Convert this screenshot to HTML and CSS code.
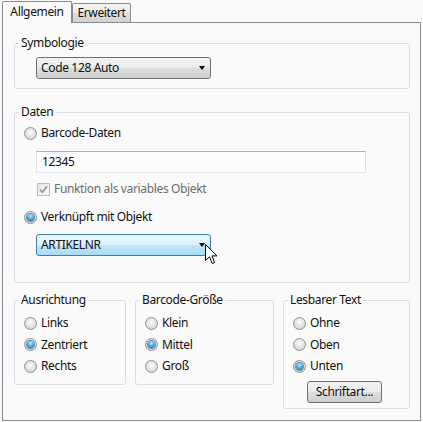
FILE: index.html
```html
<!DOCTYPE html>
<html lang="de">
<head>
<meta charset="utf-8">
<title>Barcode</title>
<link rel="stylesheet" href="styles.css">
</head>
<body>
<div class="dialog">
  <div class="tabs">
    <div class="tab active">Allgemein</div>
    <div class="tab">Erweitert</div>
  </div>
  <div class="panel">
    <fieldset class="group g-sym">
      <legend>Symbologie</legend>
      <div class="body">
        <div class="combo"><span class="val">Code 128 Auto</span><span class="arrow"></span></div>
      </div>
    </fieldset>

    <fieldset class="group g-daten">
      <legend>Daten</legend>
      <div class="body">
        <div class="opt"><span class="radio"></span><span>Barcode-Daten</span></div>
        <div class="textbox">12345</div>
        <div class="opt chk disabled">
          <span class="checkbox"><svg width="13" height="13" viewBox="0 0 13 13"><path d="M3 6.5 L5.4 9.2 L10 3.4" fill="none" stroke="#9a9a9a" stroke-width="1.7"/></svg></span>
          <span>Funktion als variables Objekt</span>
        </div>
        <div class="opt opt-link"><span class="radio on"></span><span>Verknüpft mit Objekt</span></div>
        <div class="combo hot"><span class="val">ARTIKELNR</span><span class="arrow"></span>
          <svg class="cursor" width="13" height="21" viewBox="0 0 13 21"><path d="M0.5 0.5 L0.5 16.5 L4.5 12.8 L7.2 19.5 L9.6 18.5 L7 11.9 L12 11.9 Z" fill="#fff" stroke="#000" stroke-width="1" stroke-linejoin="miter"/></svg>
        </div>
      </div>
    </fieldset>

    <div class="row">
      <fieldset class="group g-aus">
        <legend>Ausrichtung</legend>
        <div class="body list">
          <div class="opt"><span class="radio"></span><span>Links</span></div>
          <div class="opt"><span class="radio on"></span><span>Zentriert</span></div>
          <div class="opt"><span class="radio"></span><span>Rechts</span></div>
        </div>
      </fieldset>
      <fieldset class="group g-size">
        <legend>Barcode-Größe</legend>
        <div class="body list">
          <div class="opt"><span class="radio"></span><span>Klein</span></div>
          <div class="opt"><span class="radio on"></span><span>Mittel</span></div>
          <div class="opt"><span class="radio"></span><span>Groß</span></div>
        </div>
      </fieldset>
      <fieldset class="group g-text">
        <legend>Lesbarer Text</legend>
        <div class="body list">
          <div class="opt"><span class="radio"></span><span>Ohne</span></div>
          <div class="opt"><span class="radio"></span><span>Oben</span></div>
          <div class="opt"><span class="radio on"></span><span>Unten</span></div>
          <div class="button">Schriftart...</div>
        </div>
      </fieldset>
    </div>
  </div>
</div>
</body>
</html>
```

FILE: styles.css
```css
* { box-sizing: border-box; }
html, body {
  margin: 0;
  padding: 0;
  background: #fafafa;
}
body {
  font-family: "Noto Sans", "Open Sans", sans-serif;
  font-size: 12px;
  line-height: 16px;
  letter-spacing: -0.35px;
  color: #111;
}
.dialog {
  width: 423px;
  height: 422px;
}
.tabs {
  display: flex;
  align-items: flex-end;
  padding-left: 2px;
  margin-top: 1px;
  height: 21px;
  position: relative;
  z-index: 2;
}
.tab {
  border: 1px solid #898c95;
  border-bottom: none;
  height: 19px;
  width: 59px;
  line-height: 17px;
  text-align: center;
  background: linear-gradient(#f3f3f3 0%, #ebebeb 50%, #dedede 50%, #d2d2d2 100%);
  border-radius: 2px 2px 0 0;
}
.tab.active {
  width: 70px;
  height: 22px;
  margin-bottom: -1px;
  background: #fafafa;
  line-height: 19px;
  border-right: 1px solid #898c95;
}
.panel {
  margin-left: 2px;
  width: 419px;
  height: 399px;
  border: 1px solid #898c95;
  padding: 12px 10px 10px 11px;
  background: #fafafa;
}
.group {
  margin: 0;
  padding: 0;
  border: 1px solid #d5dfe5;
  border-radius: 3px;
  min-width: 0;
}
.group legend {
  padding: 0 2px;
  margin-left: 4px;
  line-height: 16px;
}
.g-sym .body { padding: 6px 0 9px 21px; }
.g-daten { margin-top: 15px; }
.g-daten .body { padding: 5px 0 26px 9px; }

.opt {
  display: flex;
  align-items: center;
  height: 16px;
  gap: 4px;
}
.radio {
  width: 13px;
  height: 13px;
  border-radius: 50%;
  border: 1px solid #929292;
  background: radial-gradient(circle at 50% 40%, #fbfbfb 0%, #e6e6e6 45%, #c9c9c9 100%);
  display: flex;
  align-items: center;
  justify-content: center;
  flex: none;
}
.radio.on::after {
  content: "";
  width: 7px;
  height: 7px;
  border-radius: 50%;
  background: radial-gradient(circle at 50% 30%, #b9ecff 0%, #4eb3e4 45%, #1d5f8f 100%);
  box-shadow: 0 0 0 1px #5a8db5;
}
.textbox {
  margin: 10px 0 0 12px;
  width: 330px;
  height: 22px;
  border: 1px solid #dfe3e8;
  border-top-color: #abadb3;
  border-left-color: #e2e3ea;
  border-right-color: #dbdfe6;
  border-bottom-color: #e3e9ef;
  background: #fcfcfc;
  padding: 0 5px;
  line-height: 20px;
}
.chk {
  margin: 8px 0 0 13px;
}
.checkbox {
  width: 13px;
  height: 13px;
  border: 1px solid #bcbcbc;
  background: linear-gradient(135deg, #e6e6e6, #f9f9f9);
  flex: none;
  display: flex;
  align-items: center;
  justify-content: center;
}
.checkbox svg { display: block; margin: -1px; }
.disabled { color: #6d6d6d; }
.opt-link { margin-top: 12px; }

.combo {
  position: relative;
  width: 175px;
  height: 22px;
  border: 1px solid #707070;
  border-radius: 3px;
  background: linear-gradient(#f2f2f2 0%, #ebebeb 50%, #dddddd 50%, #cfcfcf 100%);
  display: flex;
  align-items: center;
  justify-content: space-between;
  padding: 0 4px 0 4px;
}
.combo .arrow {
  width: 0;
  height: 0;
  border-left: 3.5px solid transparent;
  border-right: 3.5px solid transparent;
  border-top: 4px solid #000;
  margin-right: 1px;
}
.combo.hot {
  margin: 9px 0 0 12px;
  border-color: #3c7fb1;
  background: linear-gradient(#ecf7fd 0%, #dcf1fc 50%, #c1e7fd 50%, #a9dbf6 100%);
}
.cursor {
  position: absolute;
  left: 168px;
  top: 9px;
  z-index: 3;
}

.row {
  display: flex;
  align-items: flex-start;
  gap: 9px;
  margin-top: 9px;
}
.g-aus { width: 112px; }
.g-size { width: 139px; }
.g-text { width: 127px; }
.list {
  display: flex;
  flex-direction: column;
  gap: 5.5px;
  padding: 7px 0 10px 9px;
}
.g-text .list { padding-bottom: 5px; }
.button {
  margin: 1.5px 0 0 14px;
  width: 75px;
  height: 22px;
  border: 1px solid #707070;
  border-radius: 3px;
  background: linear-gradient(#f2f2f2 0%, #ebebeb 50%, #dddddd 50%, #cfcfcf 100%);
  text-align: center;
  line-height: 20px;
}
```
